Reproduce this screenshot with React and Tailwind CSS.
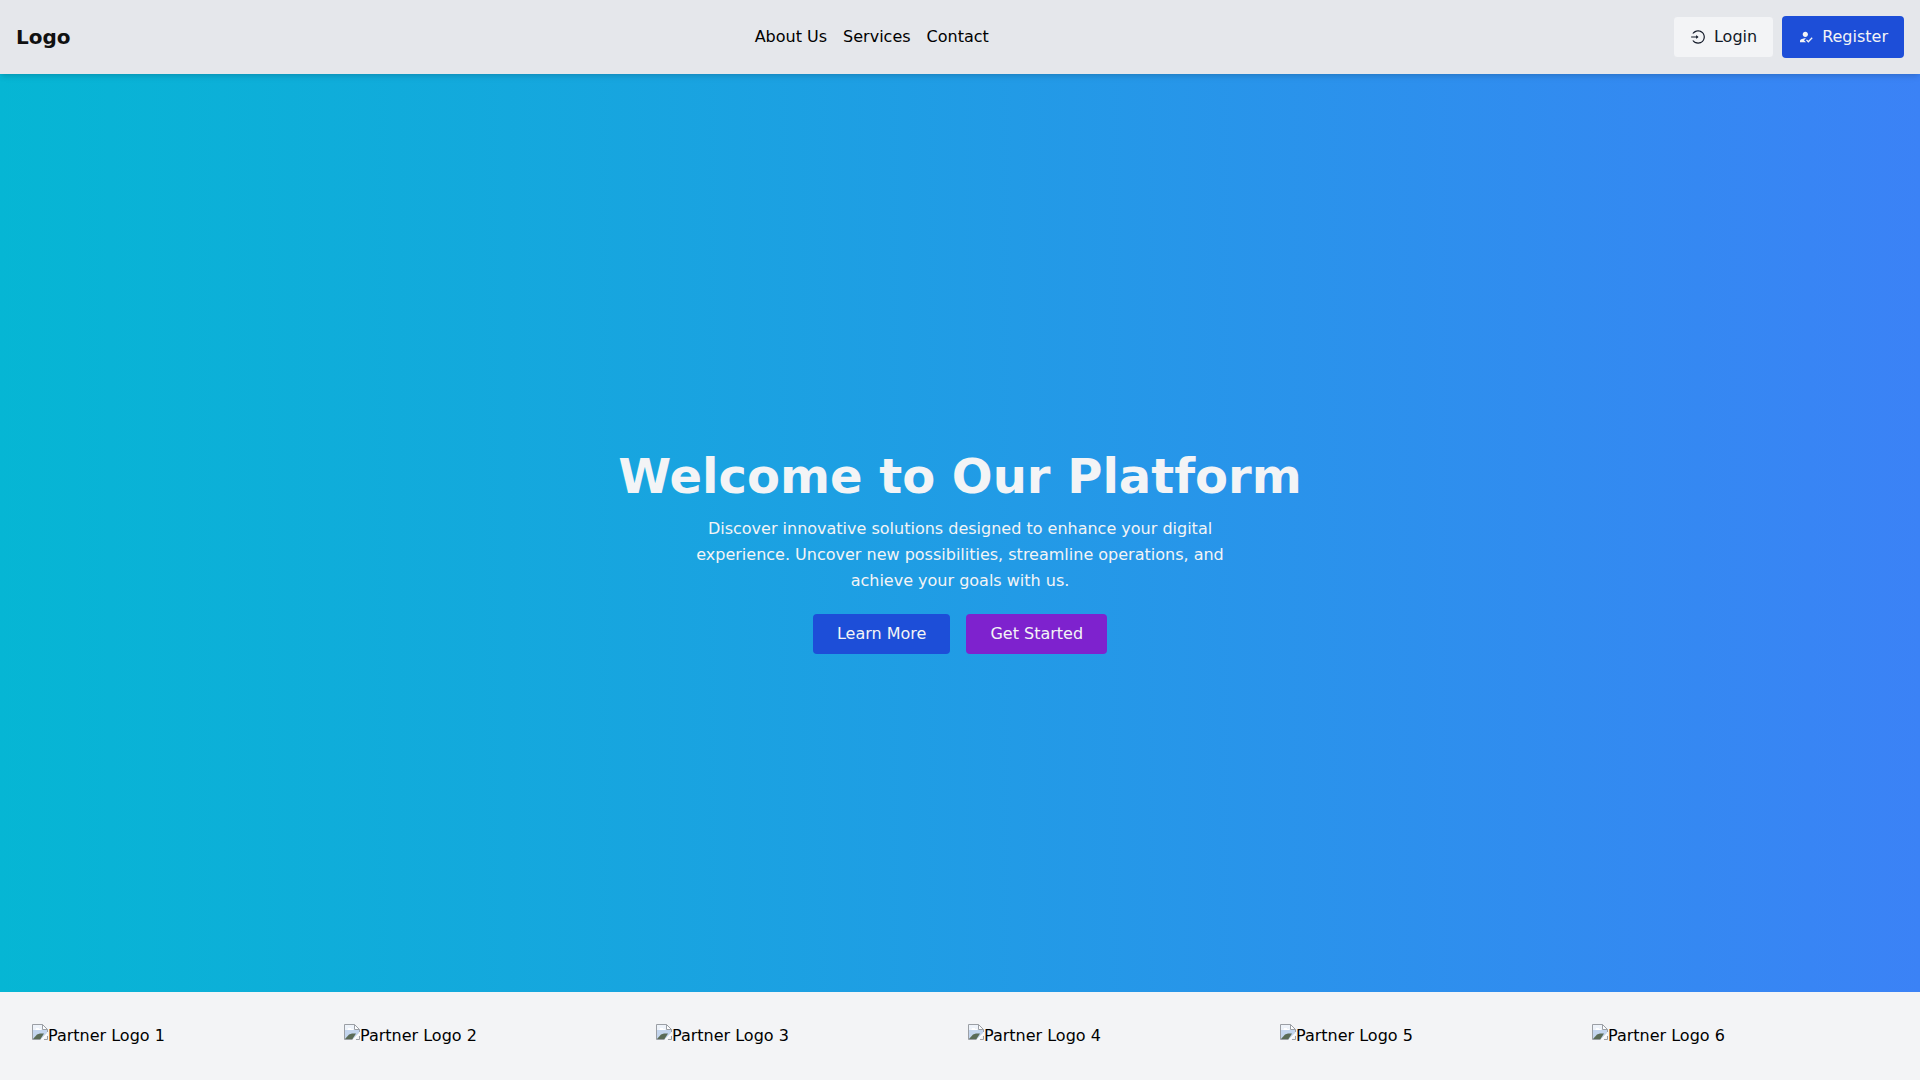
import * as React from "react"
import { cva } from "class-variance-authority"
import { AiOutlineLogin } from "react-icons/ai"
import { MdHowToReg } from "react-icons/md"

const buttonVariants = cva("inline-flex items-center justify-center rounded-sm py-2 cursor-pointer", {
  variants: {
    variant: {
      light: "border border-[#e5e7eb] bg-[#f3f4f6] px-4 text-[#111827] hover:bg-white",
      primary: "bg-[#1d4ed8] px-4 text-[#f3f4f6] hover:bg-[#1e40af]",
      blue: "bg-[#1d4ed8] px-6 text-[#f3f4f6] hover:bg-[#1e40af]",
      purple: "bg-[#7e22ce] px-6 text-[#f3f4f6] hover:bg-[#6b21a8]",
    },
  },
})

const Button = ({ variant, children, ...props }) => (
  <button type="button" className={buttonVariants({ variant })} {...props}>
    {children}
  </button>
)

const links = ["About Us", "Services", "Contact"]
const partners = [1, 2, 3, 4, 5, 6]

const Header = () => (
  <header className="relative flex items-center justify-between bg-[#e5e7eb] p-4 shadow-md">
    <a href="#home" className="text-xl font-bold text-[#111111]">
      Logo
    </a>
    <nav>
      <ul className="flex gap-4">
        {links.map((link) => (
          <li key={link}>
            <a href="#" className="hover:underline">
              {link}
            </a>
          </li>
        ))}
      </ul>
    </nav>
    <div className="flex gap-2">
      <Button variant="light">
        <AiOutlineLogin className="mr-2" aria-hidden="true" />
        Login
      </Button>
      <Button variant="primary">
        <MdHowToReg className="mr-2" aria-hidden="true" />
        Register
      </Button>
    </div>
  </header>
)

const Hero = () => (
  <section className="flex min-h-[85vh] flex-col items-center justify-center bg-linear-to-r/srgb from-[#06b6d4] to-[#3b82f6] px-4 pt-10 text-center text-[#f3f4f6]">
    <h1 className="mb-4 text-5xl font-bold">Welcome to Our Platform</h1>
    <p className="mb-5 max-w-xl leading-[26px]">
      Discover innovative solutions designed to enhance your digital experience. Uncover new
      possibilities, streamline operations, and achieve your goals with us.
    </p>
    <div className="flex gap-4">
      <Button variant="blue">Learn More</Button>
      <Button variant="purple">Get Started</Button>
    </div>
  </section>
)

// Torn picture placeholder
const MissingImage = () => (
  <svg width="16" height="16" viewBox="0 0 16 16" className="shrink-0" aria-hidden="true">
    <path d="M1 1h9.5L15 5.500V9L9 15H1z" fill="#c3d5ee" />
    <path d="M1 1h9v4h5v1H1z" fill="#eef3fa" />
    <path d="M3 5.500h1V4h3v1h2v1H3z" fill="#fff" />
    <path d="M1 15l4-4.500L8 9.500h4L8.500 15z" fill="#5a6b57" />
    <path d="M10.500 1v4.500H15z" fill="#fff" />
    <path d="M9 15.500L15.500 9v1.500L10.500 15.500z" fill="#fff" />
    <path d="M8.500 15.500H.5V.5h10l5 5V8M10.500.5v5h5" fill="none" stroke="#9b9fa5" />
    <path d="M15.500 12v3.500H12" fill="none" stroke="#9b9fa5" />
  </svg>
)

const Partners = () => (
  <section className="bg-[#f3f4f6] p-8">
    <ul className="grid grid-cols-6 gap-4">
      {partners.map((n) => (
        <li key={n} className="flex h-12 items-start">
          <MissingImage />
          <span>Partner Logo {n}</span>
        </li>
      ))}
    </ul>
  </section>
)

export default function App() {
  return (
    <div className="min-h-screen bg-[#f3f4f6] font-['DejaVu_Sans',sans-serif] text-base text-black">
      <Header />
      <main>
        <Hero />
        <Partners />
      </main>
    </div>
  )
}
